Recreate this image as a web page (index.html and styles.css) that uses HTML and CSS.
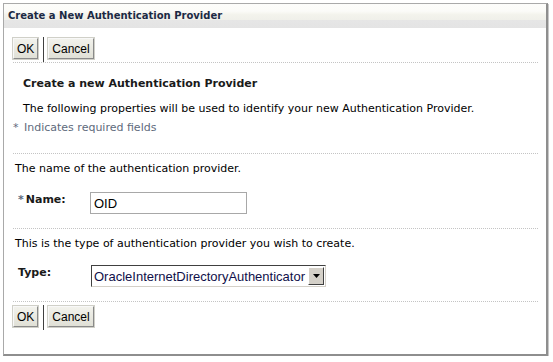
FILE: index.html
```html
<!DOCTYPE html>
<html lang="en">
<head>
    <meta charset="UTF-8">
    <title>Create a New Authentication Provider</title>
    <link rel="stylesheet" href="styles.css">
</head>
<body>
    <div class="dialog">
        <div class="dialog-header">Create a New Authentication Provider</div>

        <div class="button-bar">
            <button class="btn">OK</button>
            <span class="btn-sep"></span>
            <button class="btn">Cancel</button>
        </div>

        <div class="section intro">
            <h2 class="section-title">Create a new Authentication Provider</h2>
            <p class="intro-text">The following properties will be used to identify your new Authentication Provider.</p>
            <p class="required-note"><span class="req">*</span> Indicates required fields</p>
        </div>

        <div class="section">
            <p class="help">The name of the authentication provider.</p>
            <div class="field">
                <label class="field-label" for="name"><span class="req">*</span>Name:</label>
                <input class="text-input" type="text" id="name" value="OID">
            </div>
        </div>

        <div class="section">
            <p class="help">This is the type of authentication provider you wish to create.</p>
            <div class="field type-field">
                <label class="field-label type-label" for="type">Type:</label>
                <div class="select">
                    <span class="select-value">OracleInternetDirectoryAuthenticator</span>
                    <span class="select-arrow">
                        <svg width="7" height="4" viewBox="0 0 7 4"><path d="M0 0h7L3.5 4z" fill="#000"/></svg>
                    </span>
                </div>
            </div>
        </div>

        <div class="button-bar bottom">
            <button class="btn">OK</button>
            <span class="btn-sep"></span>
            <button class="btn">Cancel</button>
        </div>
    </div>
</body>
</html>
```

FILE: styles.css
```css
:root {
    --text: #000;
    --label: #1a1a1a;
    --muted: #5e6a7c;
    --dots: #c4c4c4;
    --frame: #a9a9a9;
}

* {
    box-sizing: border-box;
}

html, body {
    background: #fff;
}

body {
    margin: 3px;
    font-family: Tahoma, "DejaVu Sans", sans-serif;
    font-size: 11px;
    line-height: 13px;
    color: var(--text);
}

p {
    margin: 0;
}

.dialog {
    width: 545px;
    height: 353px;
    border: 1px solid var(--frame);
    border-right: 2px solid #8e8e8e;
    border-bottom: 2px solid #8e8e8e;
    box-shadow: 1px 1px 0 #c8c8c8;
    background: #fff;
}

.dialog-header {
    height: 24px;
    padding: 5px 0 0 4px;
    font-weight: bold;
    font-size: 10px;
    color: #1c2a44;
    background: linear-gradient(#fcfcfa 0%, #fbfbf8 30%, #f3f3ec 45%, #f0f0ea 65%, #e6e6e6 66%, #e4e4e4 100%);
}

.button-bar {
    display: flex;
    align-items: flex-start;
    height: 26px;
    margin: 9px 0 0 9px;
    width: 525px;
    border-bottom: 1px dotted var(--dots);
}

.button-bar.bottom {
    margin-top: 3px;
    border-bottom: none;
}

.btn {
    height: 21px;
    margin-top: 1px;
    padding: 0 3px;
    font-family: "Liberation Sans", Arial, sans-serif;
    font-size: 12px;
    color: #000;
    background: linear-gradient(#f2f2ec, #e0e0d6);
    border: 1px solid;
    border-color: #f8f8f8 #8a8a8a #8a8a8a #f8f8f8;
    outline: 1px solid #d0d0c8;
    border-radius: 0;
}

.btn-sep {
    width: 1px;
    height: 25px;
    margin: 0 4px 0 5px;
    background: #404040;
}

.section {
    margin-left: 9px;
    width: 525px;
    border-bottom: 1px dotted var(--dots);
}

.intro {
    padding: 14px 0 19px 0;
}

.section-title {
    margin: 0 0 12px 10px;
    font-size: 11px;
    line-height: 13px;
    font-weight: bold;
    color: var(--label);
}

.intro-text {
    margin: 0 0 6px 10px;
}

.required-note {
    color: var(--muted);
}

.req {
    color: var(--muted);
    margin-right: 2px;
}

.help {
    margin: 8px 0 0 2px;
}

.field {
    display: flex;
    align-items: flex-start;
    margin: 17px 0 0 5px;
    padding-bottom: 14px;
}

.type-field {
    margin-top: 15px;
}

.field-label {
    width: 72px;
    padding-top: 1px;
    font-weight: bold;
    color: var(--label);
}

.type-label {
    width: 73px;
}

.text-input {
    width: 157px;
    height: 22px;
    padding: 1px 3px 0;
    font-family: "Liberation Sans", Arial, sans-serif;
    font-size: 13px;
    border: 1px solid #a8a8a8;
    color: #000;
}

.select {
    display: flex;
    align-items: center;
    width: 235px;
    height: 22px;
    border: 1px solid;
    border-color: #404040 #d4d0c8 #d4d0c8 #404040;
    background: #fff;
}

.select-value {
    flex: 1;
    padding-left: 2px;
    font-family: "Liberation Sans", Arial, sans-serif;
    font-size: 13px;
    color: #10104a;
}

.select-arrow {
    display: flex;
    align-items: center;
    justify-content: center;
    width: 16px;
    height: 18px;
    margin-right: 1px;
    background: #d4d0c8;
    border: 1px solid;
    border-color: #fff #404040 #404040 #fff;
}
```
